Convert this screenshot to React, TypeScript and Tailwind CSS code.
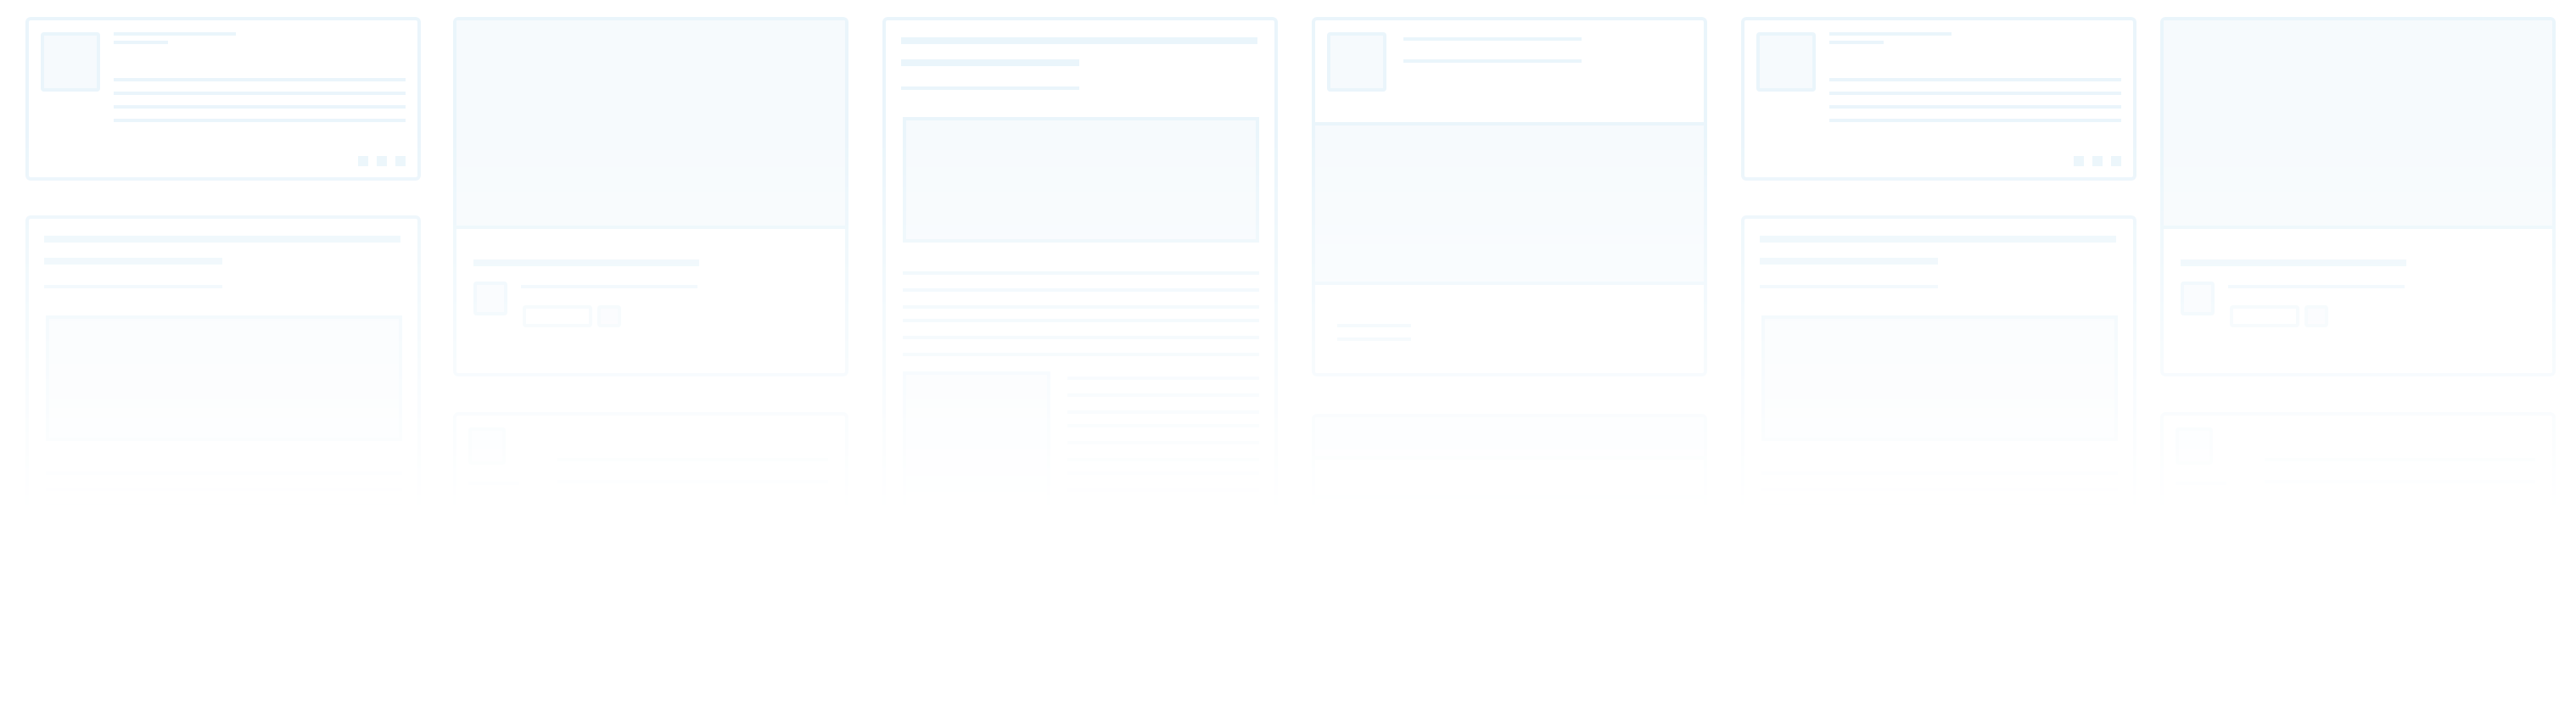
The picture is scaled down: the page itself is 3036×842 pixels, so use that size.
// Skeleton wall — six columns of placeholder cards fading out toward the bottom.

const BAR  = 'bg-[#eaf5fb]';
const FILL = 'rounded-[4px] border-4 border-[#eaf5fb] bg-[#f6fafd]';
const CARD = 'w-[466px] shrink-0 overflow-hidden rounded-[6px] border-4 border-[#eaf5fb] bg-white';

function Bar({ w, h = 'h-1', className = '' }: { w: string; h?: string; className?: string }) {
  return <div className={`${h} ${w} ${BAR} ${className}`} />;
}

function LineGroup({ count, w }: { count: number; w: string }) {
  return (
    <div className="flex flex-col gap-4">
      {Array.from({ length: count }).map((_, i) => <Bar key={i} w={w} />)}
    </div>
  );
}

// thumbnail + title lines + text + action dots
function ListCard() {
  return (
    <div className={`${CARD} h-[193px] px-[14px] pt-[14px]`}>
      <div className="flex gap-4">
        <div className={`h-[70px] w-[70px] shrink-0 ${FILL}`} />
        <div className="flex-1">
          <Bar w="w-[144px]" />
          <Bar w="w-[64px]" className="mt-[6px]" />
          <div className="mt-[40px] flex flex-col gap-3">
            <Bar w="w-full" />
            <Bar w="w-full" />
            <Bar w="w-full" />
            <Bar w="w-full" />
          </div>
          <div className="mt-[40px] flex justify-end gap-[10px]">
            <div className={`h-3 w-3 ${BAR}`} />
            <div className={`h-3 w-3 ${BAR}`} />
            <div className={`h-3 w-3 ${BAR}`} />
          </div>
        </div>
      </div>
    </div>
  );
}

// headings + picture + body text
function ArticleCard() {
  return (
    <div className={`${CARD} mt-[41px] h-[420px] px-[18px] pt-[20px]`}>
      <Bar w="w-[420px]" h="h-2" />
      <Bar w="w-[210px]" h="h-2" className="mt-[18px]" />
      <Bar w="w-[210px]" className="mt-6" />
      <div className={`ml-[2px] mt-8 h-[148px] w-[420px] rounded-none ${FILL}`} />
      <div className="ml-[2px] mt-[36px] flex flex-col gap-[15px]">
        <Bar w="w-[420px]" />
        <Bar w="w-[420px]" />
        <Bar w="w-[420px]" />
        <Bar w="w-[300px]" />
      </div>
    </div>
  );
}

// cover image + title + avatar with buttons
function MediaCard() {
  return (
    <div className={`${CARD} h-[424px]`}>
      <div className="h-[246px] border-b-4 border-[#eaf5fb] bg-[#f6fafd]" />
      <div className="px-[20px] pt-[36px]">
        <Bar w="w-[266px]" h="h-2" />
        <div className="mt-[18px] flex gap-4">
          <div className={`h-[40px] w-[40px] shrink-0 ${FILL}`} />
          <div>
            <Bar w="w-[208px]" className="mt-1" />
            <div className="ml-[2px] mt-[20px] flex gap-[6px]">
              <div className="h-[26px] w-[82px] rounded-[4px] border-4 border-[#eff7fb] bg-white" />
              <div className="h-[26px] w-[28px] rounded-[4px] border-4 border-[#eff7fb] bg-[#f8f9fd]" />
            </div>
          </div>
        </div>
      </div>
    </div>
  );
}

function ProfileCard() {
  return (
    <div className={`${CARD} mt-[42px] h-[180px] px-[14px] pt-[14px]`}>
      <div className="flex">
        <div className={`h-[44px] w-[44px] shrink-0 ${FILL}`} />
        <div className="ml-[61px] flex flex-col gap-[22px] pt-[36px]">
          <Bar w="w-[319px]" />
          <Bar w="w-[319px]" />
        </div>
      </div>
      <Bar w="w-[60px]" className="-mt-[2px]" />
    </div>
  );
}

// long text document with inline picture
function DocumentCard() {
  return (
    <div className={`${CARD} h-[760px] px-[18px] pt-[20px]`}>
      <Bar w="w-[420px]" h="h-2" />
      <Bar w="w-[210px]" h="h-2" className="mt-[18px]" />
      <Bar w="w-[210px]" className="mt-6" />
      <div className={`ml-[2px] mt-8 h-[148px] w-[420px] rounded-none ${FILL}`} />
      <div className="ml-[2px] mt-[34px] flex flex-col gap-3">
        <LineGroup count={3} w="w-[420px]" />
        <LineGroup count={3} w="w-[420px]" />
      </div>
      <div className="ml-[2px] mt-[18px] flex gap-5">
        <div className={`h-[190px] w-[174px] shrink-0 rounded-none ${FILL}`} />
        <div className="flex flex-col gap-3 pt-[6px]">
          <LineGroup count={3} w="w-[226px]" />
          <LineGroup count={3} w="w-[226px]" />
          <LineGroup count={3} w="w-[226px]" />
        </div>
      </div>
    </div>
  );
}

// header with avatar, picture, footer meta
function PostCard() {
  return (
    <div className={`${CARD} h-[424px]`}>
      <div className="flex h-[124px] border-b-4 border-[#eaf5fb] px-[14px] pt-[14px]">
        <div className={`h-[70px] w-[70px] shrink-0 ${FILL}`} />
        <div className="ml-[20px] pt-[6px]">
          <Bar w="w-[210px]" />
          <Bar w="w-[210px]" className="mt-[22px]" />
        </div>
      </div>
      <div className="h-[188px] border-b-4 border-[#eaf5fb] bg-[#f6fafd]" />
      <div className="grid w-[100px] grid-cols-2 gap-x-3 gap-y-3 pl-[26px] pt-[46px]">
        <Bar w="w-[44px]" />
        <Bar w="w-[44px]" />
        <Bar w="w-[44px]" />
        <Bar w="w-[44px]" />
      </div>
    </div>
  );
}

// next card down in the post column, mostly faded out
function BannerCard() {
  return (
    <div className={`${CARD} mt-[44px] h-[200px]`}>
      <div className="h-[50px] border-b-4 border-[#eaf5fb] bg-[#f6fafd]" />
      <div className="h-[46px] border-b-4 border-[#eaf5fb]" />
      <div className="h-[46px] border-b-4 border-[#eaf5fb]" />
    </div>
  );
}

export default function App() {
  return (
    <div
      className="flex h-[842px] w-[3036px] items-start overflow-hidden bg-white pt-[20px] [mask-image:linear-gradient(to_bottom,black_18%,transparent_72%)] [-webkit-mask-image:linear-gradient(to_bottom,black_18%,transparent_72%)]"
    >
      <div className="ml-[30px] flex flex-col">
        <ListCard />
        <ArticleCard />
      </div>
      <div className="ml-[38px] flex flex-col">
        <MediaCard />
        <ProfileCard />
      </div>
      <div className="ml-[40px] flex flex-col">
        <DocumentCard />
      </div>
      <div className="ml-[40px] flex flex-col">
        <PostCard />
        <BannerCard />
      </div>
      <div className="ml-[40px] flex flex-col">
        <ListCard />
        <ArticleCard />
      </div>
      <div className="ml-[28px] flex flex-col">
        <MediaCard />
        <ProfileCard />
      </div>
    </div>
  );
}
